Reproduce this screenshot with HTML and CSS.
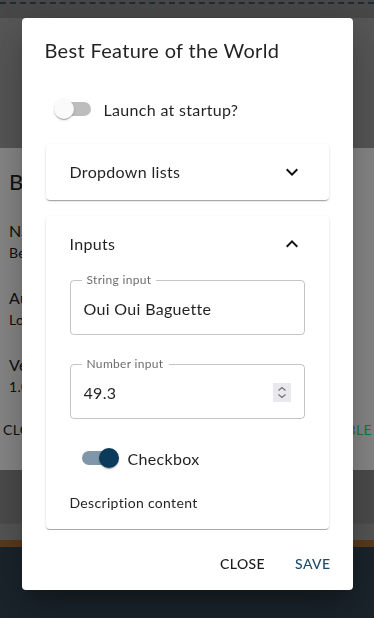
FILE: index.html
```html
<!DOCTYPE html>
<html lang="en">
<head>
  <meta charset="UTF-8">
  <meta name="viewport" content="width=device-width, initial-scale=1.0">
  <link rel="stylesheet" href="styles.css">
  <title>Feature settings</title>
</head>
<body>
  <div class="page">
    <div class="topbar"><div class="topbar-line"></div></div>
    <div class="header"></div>
    <div class="card">
      <div class="card-title">Build</div>
      <div class="field">
        <div class="field-name">Name</div>
        <div class="field-value">Beta</div>
      </div>
      <div class="field">
        <div class="field-name">Author</div>
        <div class="field-value">Louis</div>
      </div>
      <div class="field">
        <div class="field-name">Version</div>
        <div class="field-value">1.0.0</div>
      </div>
      <div class="card-actions">
        <span class="card-btn">CLOSE</span>
        <span class="card-btn green">DISABLE</span>
      </div>
    </div>
    <div class="band"></div>
    <div class="band-light"></div>
    <div class="stripe"></div>
    <div class="footer"></div>
  </div>

  <div class="overlay">
    <div class="dialog">
      <h2 class="dialog-title">Best Feature of the World</h2>
      <div class="dialog-content">
        <label class="switch-row startup">
          <span class="switch"><span class="switch-track"></span><span class="switch-thumb"></span></span>
          <span>Launch at startup?</span>
        </label>

        <div class="accordion">
          <div class="accordion-summary">
            <span>Dropdown lists</span>
            <svg class="chevron" viewBox="0 0 24 24"><path d="M16.59 8.59 12 13.17 7.41 8.59 6 10l6 6 6-6z"/></svg>
          </div>
        </div>

        <div class="accordion">
          <div class="accordion-summary">
            <span>Inputs</span>
            <svg class="chevron" viewBox="0 0 24 24"><path d="m12 8-6 6 1.41 1.41L12 10.83l4.59 4.58L18 14z"/></svg>
          </div>
          <div class="accordion-details">
            <fieldset class="outlined">
              <legend>String input</legend>
              <input type="text" value="Oui Oui Baguette" readonly>
            </fieldset>

            <fieldset class="outlined number-field">
              <legend>Number input</legend>
              <div class="number-row">
                <input type="text" value="49.3" readonly>
                <span class="spinner">
                  <svg viewBox="0 0 18 19"><path d="M5.5 7.5 9 4.5l3.5 3M5.5 11.5 9 14.5l3.5-3"/></svg>
                </span>
              </div>
            </fieldset>

            <label class="switch-row checkbox">
              <span class="switch on"><span class="switch-track"></span><span class="switch-thumb"></span></span>
              <span>Checkbox</span>
            </label>

            <div class="description">Description content</div>
          </div>
        </div>
      </div>
      <div class="dialog-actions">
        <button class="btn">CLOSE</button>
        <button class="btn primary">SAVE</button>
      </div>
    </div>
  </div>
</body>
</html>
```

FILE: styles.css
```css
body {
  margin: 0;
  width: 374px;
  height: 618px;
  overflow: hidden;
  font-family: 'Lato', 'Noto Sans', sans-serif;
  letter-spacing: 0.02em;
  color: rgba(0, 0, 0, 0.87);
}

/* page behind the dialog */
.page {
  height: 618px;
  display: flex;
  flex-direction: column;
}

.topbar {
  height: 18px;
  background-color: #878787;
}

.topbar-line {
  margin-top: 2px;
  border-top: 2px dashed #35546a;
}

.header {
  height: 130px;
  background-color: #a3a3a3;
}

.card {
  height: 322px;
  box-sizing: border-box;
  padding: 20px 2px 0 9px;
  background-color: #fff;
  color: #222;
  white-space: nowrap;
  overflow: hidden;
}

.card-title {
  font-size: 22px;
  line-height: 28px;
}

.field {
  margin-top: 23px;
}

.field-name {
  font-size: 16px;
  line-height: 24px;
}

.field-value {
  font-size: 14px;
  line-height: 20px;
}

.card-actions {
  display: flex;
  justify-content: space-between;
  margin: 15px 0 0 -6px;
}

.card-btn {
  font-size: 14px;
  line-height: 36px;
  letter-spacing: 0.4px;
}

.card-btn.green {
  color: #37e07a;
}

.band {
  height: 53px;
  background-color: #8f8f8f;
}

.band-light {
  height: 16px;
  border-top: 1px solid #959595;
  background-color: #a1a1a1;
}

.stripe {
  height: 7px;
  background-color: #ac6e33;
}

.footer {
  flex: 1;
  background-color: #314451;
}

/* dialog */
.overlay {
  position: fixed;
  inset: 0;
  display: flex;
  justify-content: center;
  align-items: flex-start;
  padding-top: 18px;
  background-color: rgba(0, 0, 0, 0.47);
}

.dialog {
  width: 331px;
  height: 572px;
  display: flex;
  flex-direction: column;
  background-color: #fff;
  border-radius: 4px;
  box-shadow: 0 11px 15px -7px rgba(0, 0, 0, 0.2), 0 24px 38px 3px rgba(0, 0, 0, 0.14), 0 9px 46px 8px rgba(0, 0, 0, 0.12);
}

.dialog-title {
  margin: 0;
  padding: 16px 24px 16px 23px;
  font-size: 20px;
  font-weight: 400;
  line-height: 32px;
}

.dialog-content {
  flex: 1;
  min-height: 0;
  overflow: hidden;
  padding: 0 24px;
}

.switch-row {
  display: flex;
  align-items: center;
  height: 38px;
  gap: 10px;
  font-size: 16px;
}

.switch-row.startup {
  margin-top: 8px;
}

.switch {
  position: relative;
  flex: none;
  width: 40px;
  height: 20px;
  margin-left: 8px;
}

.switch-track {
  position: absolute;
  left: 3px;
  top: 3px;
  width: 34px;
  height: 14px;
  border-radius: 7px;
  background-color: #bdbdbd;
}

.switch-thumb {
  position: absolute;
  left: 0;
  top: 0;
  width: 20px;
  height: 20px;
  border-radius: 50%;
  background-color: #fafafa;
  box-shadow: 0 2px 1px -1px rgba(0, 0, 0, 0.2), 0 1px 1px 0 rgba(0, 0, 0, 0.14), 0 1px 3px 0 rgba(0, 0, 0, 0.12);
}

.switch.on .switch-track {
  background-color: #7f97a8;
}

.switch.on .switch-thumb {
  left: 20px;
  background-color: #0b3a5b;
}

.accordion {
  margin-top: 16px;
  background-color: #fff;
  border-radius: 4px;
  box-shadow: 0 2px 1px -1px rgba(0, 0, 0, 0.2), 0 1px 1px 0 rgba(0, 0, 0, 0.14), 0 1px 3px 0 rgba(0, 0, 0, 0.12);
}

.accordion-summary {
  height: 56px;
  padding: 0 25px 0 24px;
  display: flex;
  align-items: center;
  justify-content: space-between;
  font-size: 16px;
}

.accordion-summary span {
  margin-top: -1px;
}

.chevron {
  width: 24px;
  height: 24px;
  fill: #111;
}

.accordion-details {
  padding: 0 24px 16px;
}

.outlined {
  margin: 0;
  padding: 0 13px 6px;
  border: 1px solid rgba(0, 0, 0, 0.23);
  border-radius: 4px;
}

.outlined legend {
  margin-left: -2px;
  padding: 0 5px;
  font-size: 12px;
  line-height: 16px;
  color: rgba(0, 0, 0, 0.6);
}

.outlined input {
  display: block;
  width: 100%;
  height: 40px;
  padding: 0;
  border: 0;
  outline: none;
  background: transparent;
  font-family: inherit;
  font-size: 16px;
  letter-spacing: 0.02em;
  color: rgba(0, 0, 0, 0.87);
}

.number-field {
  margin-top: 21px;
}

.number-row {
  display: flex;
  align-items: center;
}

.spinner {
  flex: none;
  width: 18px;
  height: 19px;
  background-color: #e9e9ed;
}

.spinner svg {
  display: block;
  width: 18px;
  height: 19px;
  fill: none;
  stroke: #6e6e6e;
  stroke-width: 1.1;
}

.switch-row.checkbox {
  margin-top: 20px;
  gap: 9px;
}

.switch-row.checkbox .switch {
  margin-left: 9px;
}

.description {
  margin-top: 16px;
  font-size: 14px;
  line-height: 20px;
}

.dialog-actions {
  display: flex;
  justify-content: flex-end;
  gap: 14px;
  padding: 16px 14px 8px;
}

.btn {
  padding: 6px 8px;
  border: none;
  background: none;
  font-family: inherit;
  font-size: 14px;
  font-weight: 500;
  line-height: 24px;
  letter-spacing: 0.4px;
  color: #1a1a1a;
  cursor: pointer;
}

.btn.primary {
  color: #1b4a69;
}
```
